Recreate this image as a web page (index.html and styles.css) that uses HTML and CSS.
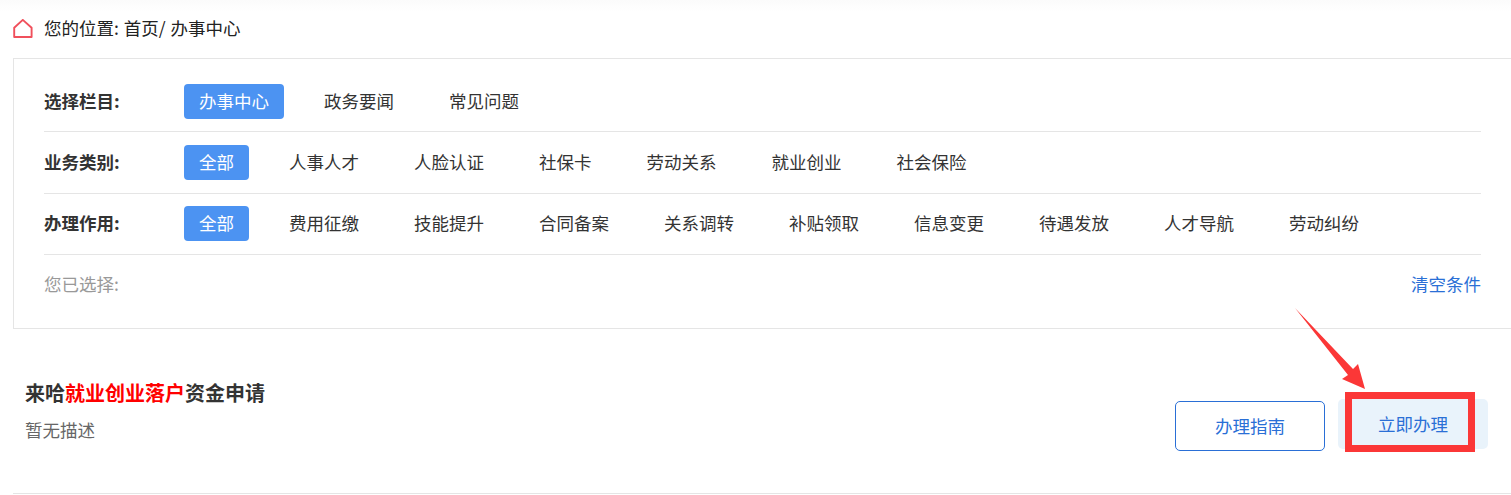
FILE: index.html
```html
<!DOCTYPE html>
<html lang="zh-CN">
<head>
    <meta charset="UTF-8">
    <meta name="viewport" content="width=device-width, initial-scale=1.0">
    <title>办事中心</title>
    <link rel="stylesheet" href="styles.css">
</head>
<body>

<div class="breadcrumb">
    <svg class="home-icon" width="20" height="20" viewBox="0 0 20 20">
        <path d="M9.8 0.9 L18.6 8.8 V18 H1.2 V8.8 Z" fill="none" stroke="#f0505c" stroke-width="1.9" stroke-linejoin="round"/>
    </svg>
    <span class="crumb-text">您的位置: 首页/ 办事中心</span>
</div>

<div class="filter-panel">
    <div class="filter-row">
        <div class="filter-label">选择栏目:</div>
        <a class="tag active">办事中心</a>
        <a class="tag">政务要闻</a>
        <a class="tag">常见问题</a>
    </div>
    <div class="filter-row">
        <div class="filter-label">业务类别:</div>
        <a class="tag active">全部</a>
        <a class="tag">人事人才</a>
        <a class="tag">人脸认证</a>
        <a class="tag">社保卡</a>
        <a class="tag">劳动关系</a>
        <a class="tag">就业创业</a>
        <a class="tag">社会保险</a>
    </div>
    <div class="filter-row">
        <div class="filter-label">办理作用:</div>
        <a class="tag active">全部</a>
        <a class="tag">费用征缴</a>
        <a class="tag">技能提升</a>
        <a class="tag">合同备案</a>
        <a class="tag">关系调转</a>
        <a class="tag">补贴领取</a>
        <a class="tag">信息变更</a>
        <a class="tag">待遇发放</a>
        <a class="tag">人才导航</a>
        <a class="tag">劳动纠纷</a>
    </div>
    <div class="selected-row">
        <span class="selected-label">您已选择:</span>
        <a class="clear-link">清空条件</a>
    </div>
</div>

<div class="service-item">
    <div class="service-info">
        <div class="service-title">来哈<span class="hl">就业创业落户</span>资金申请</div>
        <div class="service-desc">暂无描述</div>
    </div>
    <div class="service-actions">
        <a class="btn btn-guide">办理指南</a>
        <a class="btn btn-apply">立即办理</a>
    </div>
</div>

<!-- annotation drawn over the page -->
<div class="mark-box"></div>
<svg class="mark-arrow" width="80" height="90" viewBox="0 0 80 90">
    <polygon points="5,1 63,62 68,57 75,82 52,72 58,68" fill="#fb3737"/>
</svg>

</body>
</html>
```

FILE: styles.css
```css
body {
    font-family: "Noto Sans CJK SC", "Liberation Sans", sans-serif;
    font-size: 17.5px;
    color: #333;
    margin: 0;
    background: #fff;
    overflow: hidden;
}
a {
    cursor: pointer;
}
.breadcrumb {
    display: flex;
    align-items: center;
    gap: 11px;
    height: 58px;
    padding-left: 13px;
    word-spacing: 1px;
    color: #222;
    background: linear-gradient(#fbfbfb, #fff 12px);
}
.home-icon {
    flex: none;
}
.crumb-text {
    margin-bottom: 4px;
}
.filter-panel {
    margin-left: 13px;
    padding: 12px 30px 0 30px;
    height: 271px;
    box-sizing: border-box;
    border: 1px solid #e5e5e5;
    border-right: none;
}
.filter-row {
    display: flex;
    align-items: center;
    padding: 12.75px 0 12.5px;
    border-bottom: 1px solid #e5e5e5;
}
.filter-label {
    width: 140px;
    height: 35px;
    line-height: 33px;
    font-weight: bold;
}
.tag {
    height: 35px;
    line-height: 33px;
    padding: 0 15px;
    margin-right: 25px;
    border-radius: 4px;
    color: #333;
}
.tag.active {
    background: #4c93f2;
    color: #fff;
}
.selected-row {
    display: flex;
    justify-content: space-between;
    align-items: center;
    height: 57px;
}
.selected-label {
    color: #999;
}
.clear-link {
    color: #2a6fd6;
}
.service-item {
    display: flex;
    justify-content: space-between;
    margin-left: 13px;
    padding: 70px 23px 0 12px;
    height: 165px;
    box-sizing: border-box;
    border-bottom: 1px solid #e5e5e5;
}
.service-info {
    margin-top: -21px;
}
.service-title {
    font-size: 20px;
    font-weight: bold;
    line-height: 30px;
    color: #333;
}
.hl {
    color: #f00;
}
.service-desc {
    margin-top: 7px;
    line-height: 30px;
    color: #666;
}
.service-actions {
    display: flex;
    align-items: flex-start;
    gap: 13px;
}
.btn {
    width: 150px;
    height: 50px;
    line-height: 50px;
    text-align: center;
    border-radius: 5px;
    box-sizing: border-box;
    color: #2a6fd6;
}
.btn-guide {
    margin-top: 2px;
    line-height: 48px;
    border: 1px solid #2a6fd6;
}
.btn-apply {
    background: #e9f3fb;
}
.mark-box {
    position: absolute;
    left: 1345px;
    top: 392px;
    width: 130px;
    height: 60px;
    box-sizing: border-box;
    border: 7px solid #fb3737;
}
.mark-arrow {
    position: absolute;
    left: 1290px;
    top: 307px;
}
```
